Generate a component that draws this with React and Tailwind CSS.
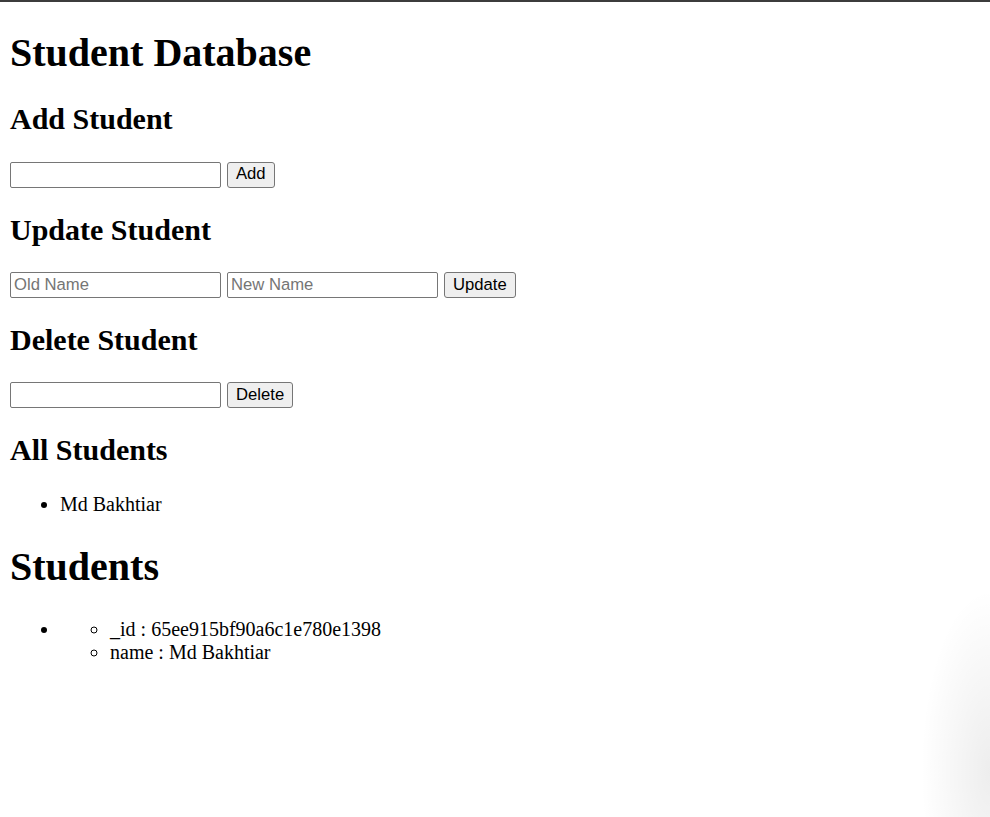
import React, { useState } from "react";

const inputCls =
  "w-[211px] h-[26px] px-[3px] border border-[#767676] rounded-[2px] bg-white text-[16.67px] text-black placeholder:text-[#757575] font-['Liberation_Sans',Arial,sans-serif] outline-none";
const btnCls =
  "h-[26px] px-[8px] border border-[#767676] rounded-[3px] bg-[#efefef] text-[16.67px] text-black leading-none font-['Liberation_Sans',Arial,sans-serif]";

function SectionTitle({ children }) {
  return (
    <h2 className="text-[30px] font-bold leading-[34.5px] mt-[24.9px] mb-[24.9px]">
      {children}
    </h2>
  );
}

export default function App() {
  const [students] = useState([
    { _id: "65ee915bf90a6c1e780e1398", name: "Md Bakhtiar" },
  ]);

  return (
    <div className="relative min-h-[817px] border-t-2 border-[#3c3c3c] bg-white text-black font-['Liberation_Serif','Times_New_Roman',serif] overflow-hidden">
      <div className="px-[10px] pb-[10px]">
        <h1 className="text-[40px] font-bold leading-[46px] mt-[27.5px] mb-[26.8px]">
          Student Database
        </h1>

        <SectionTitle>Add Student</SectionTitle>
        <div className="flex items-start gap-[6px] h-[26px]">
          <input type="text" className={inputCls} />
          <button className={btnCls}>Add</button>
        </div>

        <SectionTitle>Update Student</SectionTitle>
        <div className="flex items-start gap-[6px] h-[26px]">
          <input type="text" placeholder="Old Name" className={inputCls} />
          <input type="text" placeholder="New Name" className={inputCls} />
          <button className={btnCls}>Update</button>
        </div>

        <SectionTitle>Delete Student</SectionTitle>
        <div className="flex items-start gap-[6px] h-[26px]">
          <input type="text" className={inputCls} />
          <button className={btnCls}>Delete</button>
        </div>

        <SectionTitle>All Students</SectionTitle>
        <ul className="list-disc pl-[50px] text-[20px] leading-[23px]">
          {students.map((s) => (
            <li key={s._id}>{s.name}</li>
          ))}
        </ul>

        <h1 className="text-[40px] font-bold leading-[46px] mt-[28px] mb-[28px]">
          Students
        </h1>
        <ul className="list-disc pl-[50px] text-[20px] leading-[23px]">
          {students.map((s) => (
            <li key={s._id}>
              <ul className="list-[circle] pl-[50px]">
                <li>_id : {s._id}</li>
                <li>name : {s.name}</li>
              </ul>
            </li>
          ))}
        </ul>
      </div>
      <div className="pointer-events-none absolute right-0 bottom-0 w-[70px] h-[230px] bg-[radial-gradient(ellipse_at_100%_80%,rgba(0,0,0,0.07),transparent_70%)]" />
    </div>
  );
}
